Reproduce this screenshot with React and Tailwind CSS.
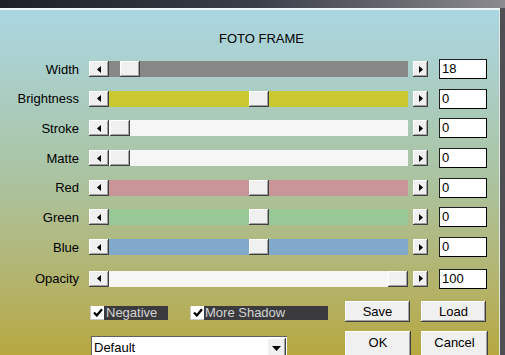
import React from "react";

const raised =
  "bg-[#f0f0f0] shadow-[inset_-1px_-1px_0_#404040,inset_1px_1px_0_#ffffff,inset_-2px_-2px_0_#a0a0a0]";

function LeftArrow() {
  return (
    <svg width="4" height="7" viewBox="0 0 4 7">
      <polygon points="4,0 4,7 0,3.5" fill="#000" />
    </svg>
  );
}
function RightArrow() {
  return (
    <svg width="4" height="7" viewBox="0 0 4 7">
      <polygon points="0,0 0,7 4,3.5" fill="#000" />
    </svg>
  );
}

const rows = [
  { label: "Width", track: "bg-[#878787]", thumb: 11, value: "18" },
  { label: "Brightness", track: "bg-[#cac932]", thumb: 140, value: "0" },
  { label: "Stroke", track: "bg-[#f6f6f6]", thumb: 1, value: "0" },
  { label: "Matte", track: "bg-[#f6f6f6]", thumb: 1, value: "0" },
  { label: "Red", track: "bg-[#c99599]", thumb: 140, value: "0" },
  { label: "Green", track: "bg-[#97c895]", thumb: 140, value: "0" },
  { label: "Blue", track: "bg-[#80a9cb]", thumb: 140, value: "0" },
  { label: "Opacity", track: "bg-[#f6f6f6]", thumb: 279, value: "100" },
];

function Row({ label, track, thumb, value, extra }) {
  return (
    <div className={"flex items-center h-[20px] " + (extra || "")}>
      <div className="w-[79px] text-right text-[13px] leading-[15px] text-black">
        {label}
      </div>
      <div className="ml-[10px] w-[339px] h-[16px] flex">
        <div className={"w-[20px] h-[16px] flex items-center justify-center " + raised}>
          <LeftArrow />
        </div>
        <div className={"relative w-[299px] h-[16px] " + track}>
          <div
            className={"absolute top-0 w-[20px] h-[16px] " + raised}
            style={{ left: thumb }}
          />
        </div>
        <div className="w-[5px]" />
        <div className={"w-[15px] h-[16px] flex items-center justify-center " + raised}>
          <RightArrow />
        </div>
      </div>
      <div className="ml-[11px] w-[48px] h-[20px] bg-white border border-black border-t-[#202020] border-l-[#202020] pl-[2px] text-[13px] leading-[18px] text-black">
        {value}
      </div>
    </div>
  );
}

function Check() {
  return (
    <div className="w-[14px] h-[14px] bg-white border-l border-b border-[#c8c8c8] flex items-center justify-center">
      <svg width="10" height="9" viewBox="0 0 10 9">
        <polyline points="1,4.5 3.8,7.5 9,1.2" fill="none" stroke="#000" strokeWidth="2.2" />
      </svg>
    </div>
  );
}

export default function App() {
  return (
    <div
      className="w-[505px] h-[355px] overflow-hidden flex flex-col bg-[#4e4e52]"
      style={{ fontFamily: '"Liberation Sans", Arial, sans-serif' }}
    >
      <div className="h-[8px] bg-linear-to-r from-[#1c2028] via-[#3a3e48] to-[#8c8c90]" />
      <div className="flex flex-1 min-h-0">
        <div className="w-[500px] border-t-2 border-t-[#eef6f6] border-r border-r-[#dfe8e0] bg-linear-to-b from-[#abd6e2] via-[#aac5a6] via-45% to-[#b7a83e] flex flex-col">
          <div className="pt-[21px] pl-[24px] text-center text-[13px] leading-[15px] text-black">
            FOTO FRAME
          </div>
          <div className="mt-[13px] flex flex-col gap-[9.7px]">
            {rows.map((r, i) => (
              <Row key={r.label} {...r} extra={i === 7 ? "mt-[2px]" : ""} />
            ))}
          </div>
          <div className="flex mt-[12px] pl-[89px]">
            <div className="w-[256px] flex flex-col">
              <div className="flex items-center mt-[5px] h-[14px]">
                <div className="ml-[1px]">
                  <Check />
                </div>
                <div className="w-[64px] h-[14px] bg-[#3b3b3e] text-[#d4d4d4] text-[13px] leading-[14px] pl-[2px]">
                  Negative
                </div>
                <div className="ml-[22px]">
                  <Check />
                </div>
                <div className="w-[124px] h-[14px] bg-[#3b3b3e] text-[#d4d4d4] text-[13px] leading-[14px] pl-[1px]">
                  More Shadow
                </div>
              </div>
              <div className="mt-[16px] ml-[2px] w-[196px] h-[24px] bg-white border-t border-l border-[#606060] flex justify-between">
                <div className="pl-[2px] pt-[3px] text-[13px] leading-[15px] text-black">
                  Default
                </div>
                <div className={"mt-[1px] mr-[1px] w-[19px] h-[22px] flex items-center justify-center " + raised}>
                  <svg width="9" height="5" viewBox="0 0 9 5">
                    <polygon points="0,0 9,0 4.5,5" fill="#000" />
                  </svg>
                </div>
              </div>
            </div>
            <div className="flex flex-col">
              <div className="flex gap-[11px]">
                <div className={"w-[65px] h-[21px] flex items-center justify-center text-[13px] text-black " + raised}>
                  Save
                </div>
                <div className={"w-[65px] h-[21px] flex items-center justify-center text-[13px] text-black " + raised}>
                  Load
                </div>
              </div>
              <div className="flex gap-[10px] mt-[9px]">
                <div className={"w-[66px] h-[26px] flex items-center justify-center text-[13px] text-black pb-[3px] " + raised}>
                  OK
                </div>
                <div className={"w-[67px] h-[26px] flex items-center justify-center text-[13px] text-black pb-[3px] " + raised}>
                  Cancel
                </div>
              </div>
            </div>
          </div>
        </div>
        <div className="flex-1 bg-[#505054]" />
      </div>
    </div>
  );
}
